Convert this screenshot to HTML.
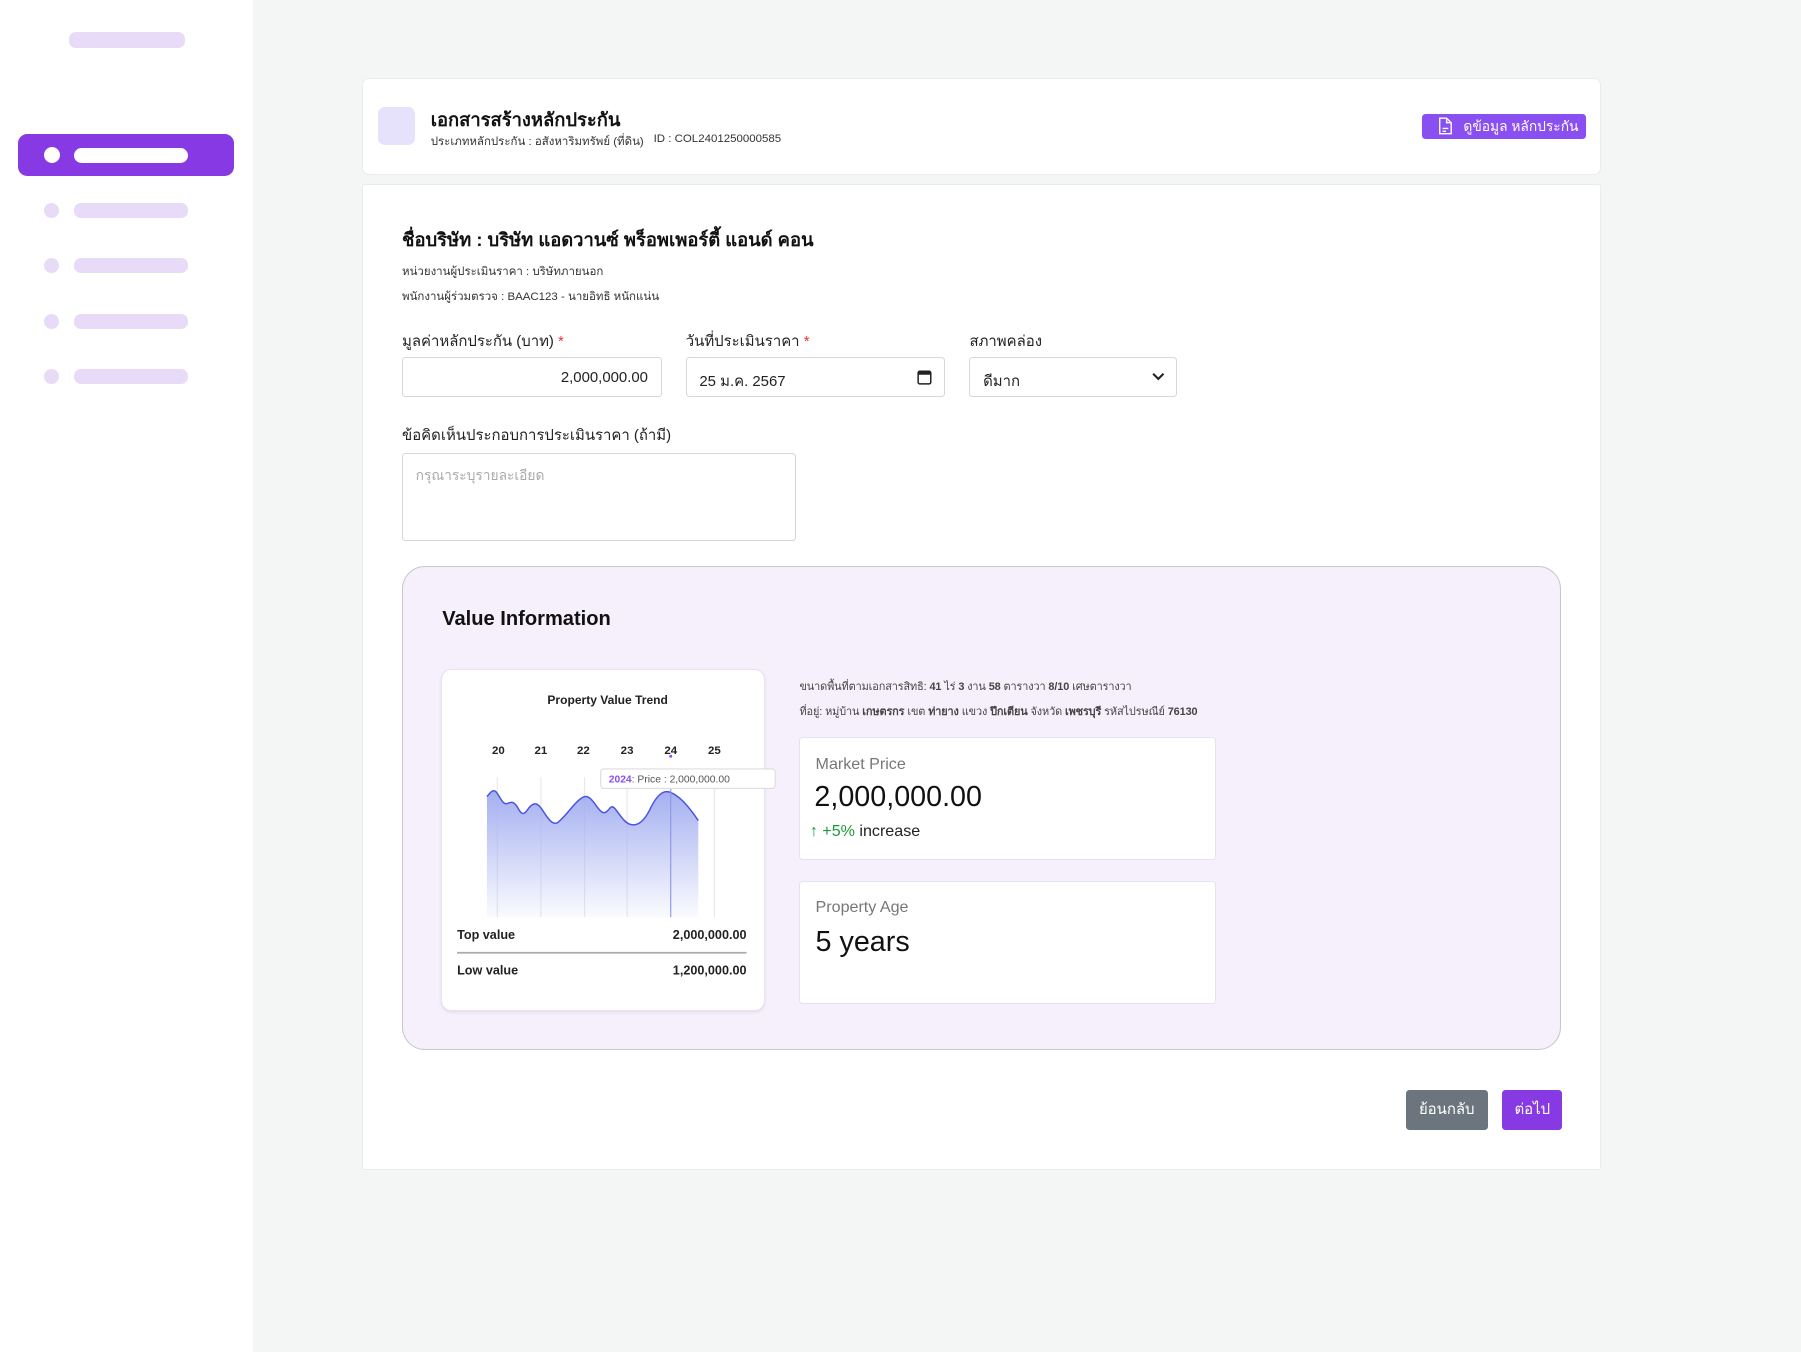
<!DOCTYPE html>
<html><head><meta charset="utf-8">
<style>
*{box-sizing:border-box;margin:0;padding:0}
html,body{width:1801px;height:1352px;overflow:hidden;background:#f4f5f5}
body{font-family:"Liberation Sans","Noto Sans CJK SC","WenQuanYi Zen Hei",sans-serif;color:#111}
#w{position:absolute;left:0;top:0;width:1568px;height:1177px;zoom:1.14866}
.a{position:absolute}
.pill{position:absolute;border-radius:6px;background:#e8dbf8}
.dot{position:absolute;width:13px;height:13px;border-radius:50%;background:#e8dbf8}
.card{position:absolute;background:#fff;border:1px solid #e9ebee;border-radius:6px}
.inp{position:absolute;background:#fff;border:1px solid #d5d7db;border-radius:3px;font-size:13px;color:#222}
.lbl{position:absolute;font-size:13px;color:#222}
.req{color:#e33}
.small{position:absolute;font-size:10px;color:#333}
</style></head><body><div id="w">
<div class="a" style="left:0;top:0;width:220px;height:1177px;background:#fff"></div>
<div class="pill" style="left:60px;top:28px;width:101px;height:14px"></div>
<div class="a" style="left:16px;top:117px;width:188px;height:36px;background:#8739e3;border-radius:8px"></div>
<div class="a" style="left:38px;top:128px;width:14px;height:14px;border-radius:50%;background:#fff"></div>
<div class="a" style="left:64px;top:129px;width:100px;height:13px;border-radius:7px;background:#fff"></div>
<div class="dot" style="left:38px;top:177px"></div><div class="pill" style="left:64px;top:177px;width:100px;height:13px"></div>
<div class="dot" style="left:38px;top:225px"></div><div class="pill" style="left:64px;top:225px;width:100px;height:13px"></div>
<div class="dot" style="left:38px;top:273px"></div><div class="pill" style="left:64px;top:273px;width:100px;height:13px"></div>
<div class="dot" style="left:38px;top:321px"></div><div class="pill" style="left:64px;top:321px;width:100px;height:13px"></div>

<div class="card" style="left:315px;top:68px;width:1079px;height:84px"></div>
<div class="a" style="left:329px;top:93px;width:32px;height:33px;border-radius:6px;background:#e6e2fb"></div>
<div class="a" style="left:375px;top:92px;font-size:16px;font-weight:bold">เอกสารสร้างหลักประกัน</div>
<div class="small" style="left:375px;top:116px">ประเภทหลักประกัน : อสังหาริมทรัพย์ (ที่ดิน)</div>
<div class="small" style="left:569px;top:116px;font-size:10px">ID : COL2401250000585</div>
<div class="a" style="left:1238px;top:99px;width:143px;height:22px;background:#8a4ff0;border-radius:3px;color:#fff;font-size:12px;line-height:22px;padding-left:36px">ดูข้อมูล หลักประกัน</div>
<svg class="a" style="left:1252px;top:102px" width="13" height="16" viewBox="0 0 13 16"><path d="M1.5 1h6l4 4v9.5h-10z M7.5 1v4h4 M4 10h5 M4 12.5h3" fill="none" stroke="#fff" stroke-width="1.2"/></svg>

<div class="card" style="left:315px;top:160px;width:1079px;height:859px;border-radius:2px"></div>
<div class="a" style="left:350px;top:197px;font-size:16px;font-weight:bold">ชื่อบริษัท : บริษัท แอดวานซ์ พร็อพเพอร์ตี้ แอนด์ คอน</div>
<div class="small" style="left:350px;top:229px">หน่วยงานผู้ประเมินราคา : บริษัทภายนอก</div>
<div class="small" style="left:350px;top:251px">พนักงานผู้ร่วมตรวจ : BAAC123 - นายอิทธิ หนักแน่น</div>

<div class="lbl" style="left:350px;top:286px">มูลค่าหลักประกัน (บาท) <span class="req">*</span></div>
<div class="lbl" style="left:597px;top:286px">วันที่ประเมินราคา <span class="req">*</span></div>
<div class="lbl" style="left:844px;top:286px">สภาพคล่อง</div>
<div class="inp" style="left:350px;top:311px;width:226px;height:35px;text-align:right;padding:9px 11px">2,000,000.00</div>
<div class="inp" style="left:597px;top:311px;width:226px;height:35px;padding:9px 11px">25 ม.ค. 2567</div>
<svg class="a" style="left:798px;top:321px" width="13" height="14" viewBox="0 0 13 14"><rect x="1" y="2" width="11" height="11" rx="1.5" fill="none" stroke="#222" stroke-width="1.3"/><rect x="1" y="2" width="11" height="3" fill="#222"/></svg>
<div class="inp" style="left:844px;top:311px;width:181px;height:35px;padding:9px 11px">ดีมาก</div>
<svg class="a" style="left:1003px;top:324px" width="11" height="8" viewBox="0 0 11 8"><path d="M1 1.5l4.5 4.5 4.5-4.5" fill="none" stroke="#222" stroke-width="1.8"/></svg>

<div class="lbl" style="left:350px;top:368px">ข้อคิดเห็นประกอบการประเมินราคา (ถ้ามี)</div>
<div class="inp" style="left:350px;top:394px;width:343px;height:77px;padding:10px 11px;color:#aaa;font-size:12px">กรุณาระบุรายละเอียด</div>

<div class="a" style="left:350px;top:493px;width:1009px;height:421px;background:#f6f0fd;border:1px solid #c9c6cc;border-radius:20px"></div>
<div class="a" style="left:385px;top:529px;font-size:17.5px;font-weight:bold">Value Information</div>

<div class="a" style="left:384px;top:582px;width:282px;height:298px;background:#fff;border:1px solid #e6e3ea;border-radius:9px;box-shadow:0 1px 3px rgba(0,0,0,.08)"></div>
<div class="a" style="left:384px;top:603px;width:290px;text-align:center;font-size:10.5px;font-weight:bold;color:#222">Property Value Trend</div>
<svg class="a" style="left:384px;top:582px" width="300" height="298" viewBox="384 582 300 298">
<defs><linearGradient id="g" x1="0" y1="0" x2="0" y2="1"><stop offset="0" stop-color="#a4aff0"/><stop offset="1" stop-color="#a4aff0" stop-opacity="0.05"/></linearGradient></defs>
<g font-family="Liberation Sans" font-size="10" font-weight="bold" fill="#222" text-anchor="middle">
<text x="434" y="656">20</text><text x="471" y="656">21</text><text x="508" y="656">22</text><text x="546" y="656">23</text><text x="584" y="656">24</text><text x="622" y="656">25</text></g>
<circle cx="584" cy="658" r="1.3" fill="#8a4ff0"/>
<g stroke="#e8e8ee" stroke-width="1"><line x1="433" y1="676" x2="433" y2="798"/><line x1="471" y1="676" x2="471" y2="798"/><line x1="509" y1="676" x2="509" y2="798"/><line x1="546" y1="676" x2="546" y2="798"/><line x1="622" y1="676" x2="622" y2="798"/></g>
<path d="M424 693 C427 690 429 686 432 689 C436 694 438 701 442 699 C446 697 448 698 451 703 C454 709 456 709 459 705 C463 699 467 697 471 703 C476 710 480 718 485 716 C492 712 503 693 510 693 C516 693 520 705 525 707 C530 708 531 699 535 703 C540 709 543 715 548 717 C556 720 562 713 567 702 C572 692 578 686 585 690 C592 693 600 702 608 714 L608 798 L424 798 Z" fill="url(#g)"/>
<path d="M424 693 C427 690 429 686 432 689 C436 694 438 701 442 699 C446 697 448 698 451 703 C454 709 456 709 459 705 C463 699 467 697 471 703 C476 710 480 718 485 716 C492 712 503 693 510 693 C516 693 520 705 525 707 C530 708 531 699 535 703 C540 709 543 715 548 717 C556 720 562 713 567 702 C572 692 578 686 585 690 C592 693 600 702 608 714" fill="none" stroke="#4a55e0" stroke-width="1.3"/>
<line x1="584" y1="686" x2="584" y2="798" stroke="#8f97ea" stroke-width="1"/>
<rect x="523" y="669" width="152" height="17" rx="3" fill="#fff" stroke="#ddd"/>
<text x="530" y="681" font-family="Liberation Sans" font-size="9"><tspan fill="#8a4ff0" font-weight="bold">2024</tspan><tspan fill="#555">: Price : 2,000,000.00</tspan></text>
<line x1="398" y1="829" x2="650" y2="829" stroke="#aaa" stroke-width="1.5"/>
<g font-family="Liberation Sans" font-size="11" font-weight="bold" fill="#222">
<text x="398" y="817">Top value</text><text x="650" y="817" text-anchor="end">2,000,000.00</text>
<text x="398" y="848">Low value</text><text x="650" y="848" text-anchor="end">1,200,000.00</text></g>
</svg>

<div class="small" style="left:696px;top:589px;color:#444;font-size:9.5px;letter-spacing:-0.1px">ขนาดพื้นที่ตามเอกสารสิทธิ: <b>41</b> ไร่ <b>3</b> งาน <b>58</b> ตารางวา <b>8/10</b> เศษตารางวา</div>
<div class="small" style="left:696px;top:611px;color:#444;font-size:9.5px;letter-spacing:-0.1px">ที่อยู่: หมู่บ้าน <b>เกษตรกร</b>  เขต <b>ท่ายาง</b> แขวง <b>ปึกเตียน</b> จังหวัด <b>เพชรบุรี</b> รหัสไปรษณีย์ <b>76130</b></div>

<div class="a" style="left:696px;top:642px;width:363px;height:107px;background:#fff;border:1px solid #e4e4ea;border-radius:3px"></div>
<div class="a" style="left:710px;top:657px;font-size:14px;color:#777">Market Price</div>
<div class="a" style="left:709px;top:680px;font-size:25px;color:#111">2,000,000.00</div>
<div class="a" style="left:705px;top:716px;font-size:14px;color:#222"><span style="color:#1a9a3a">↑ +5%</span> increase</div>

<div class="a" style="left:696px;top:767px;width:363px;height:107px;background:#fff;border:1px solid #e4e4ea;border-radius:3px"></div>
<div class="a" style="left:710px;top:782px;font-size:14px;color:#777">Property Age</div>
<div class="a" style="left:710px;top:806px;font-size:25px;color:#111">5 years</div>

<div class="a" style="left:1224px;top:949px;width:71px;height:35px;background:#6c757d;border-radius:3px;color:#fff;font-size:13px;line-height:35px;text-align:center">ย้อนกลับ</div>
<div class="a" style="left:1308px;top:949px;width:52px;height:35px;background:#8739e3;border-radius:3px;color:#fff;font-size:13px;line-height:35px;text-align:center">ต่อไป</div>
</div></body></html>
